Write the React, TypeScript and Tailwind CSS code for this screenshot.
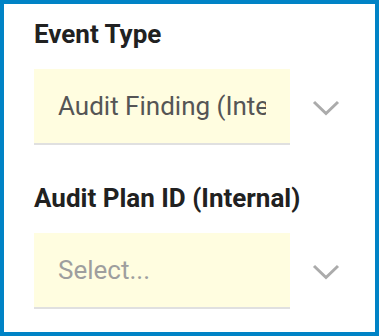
function Chevron() {
  return (
    <svg width="28" height="16" viewBox="0 0 28 16" fill="none" className="shrink-0">
      <path d="M2 2L14 13.5L26 2" stroke="#ababab" strokeWidth="3" />
    </svg>
  );
}

function Field({ label, value, placeholder }: { label: string; value?: string; placeholder?: string }) {
  return (
    <div>
      <div className="text-[26px] leading-[30px] font-bold text-[#212121]">{label}</div>
      <div className="mt-[20px] flex items-center">
        <div className="flex h-[76px] w-[256px] items-center border-b-2 border-[#e0e0e0] bg-[#fffde0] pl-[24px] pr-[24px]">
          <span
            className={
              "overflow-hidden whitespace-nowrap text-[26px] leading-[30px] " +
              (value ? "text-[#555555]" : "text-[#9e9e9e]")
            }
          >
            {value ?? placeholder}
          </span>
        </div>
        <div className="ml-[22px] mt-[1px]">
          <Chevron />
        </div>
      </div>
    </div>
  );
}

export default function App() {
  return (
    <div
      className="h-[336px] w-[379px] border-4 border-[#0083c6] bg-white px-[30px] pt-[15px]"
      style={{ fontFamily: "Roboto, 'Noto Sans', sans-serif" }}
    >
      <Field label="Event Type" value="Audit Finding (Internal)" />
      <div className="mt-[38px]">
        <Field label="Audit Plan ID (Internal)" placeholder="Select..." />
      </div>
    </div>
  );
}
